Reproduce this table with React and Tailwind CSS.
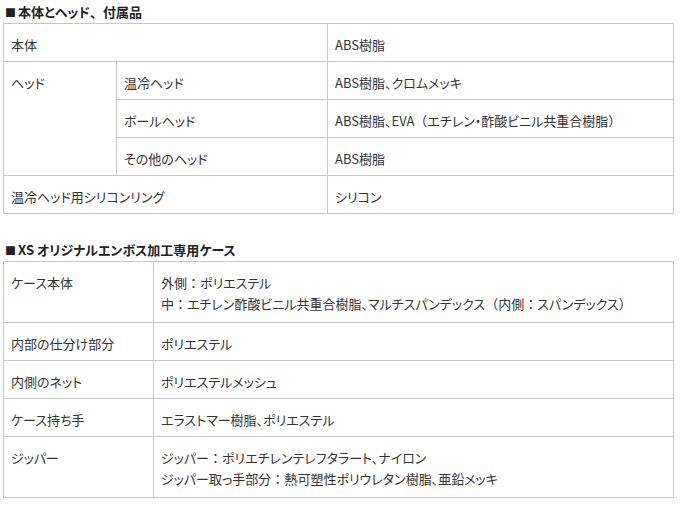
const font = "font-['Noto_Sans_CJK_JP',sans-serif] [font-feature-settings:'palt']";

const td = "border border-[#c8c8c8] px-[7px] pt-[10px] pb-[6px] align-top text-left font-normal";

// full-width punctuation keeps its normal width, kana stay proportional
function T({ s }) {
  return s.split(/([：（）])/).map((p, i) =>
    /^[：（）]$/.test(p) ? (
      <span key={i} className="[font-feature-settings:normal]">{p}</span>
    ) : (
      p
    )
  );
}

function Title({ children }) {
  return (
    <h3 className="pl-[5px] pt-[2px] mb-[1px] h-[22px] text-[13px] leading-[20px] font-bold text-[#222]">
      <span className="text-[11px] leading-none mr-[2px]">■</span>
      {children}
    </h3>
  );
}

export default function App() {
  return (
    <div className={`${font} bg-white w-[682px] h-[507px] text-[13px] leading-[21px] text-[#333]`}>
      <Title>
        本体とヘッド<span className="[font-feature-settings:normal]">、</span>付属品
      </Title>
      <table className="ml-[3px] w-[670px] border-collapse table-fixed">
        <colgroup>
          <col className="w-[113px]" />
          <col className="w-[211px]" />
          <col className="w-[346px]" />
        </colgroup>
        <tbody>
          <tr>
            <td className={td} colSpan={2}>本体</td>
            <td className={td}>ABS樹脂</td>
          </tr>
          <tr>
            <td className={td} rowSpan={3}>ヘッド</td>
            <td className={td}>温冷ヘッド</td>
            <td className={td}>ABS樹脂、クロムメッキ</td>
          </tr>
          <tr>
            <td className={td}>ボールヘッド</td>
            <td className={td}>
              <T s="ABS樹脂、EVA（エチレン・酢酸ビニル共重合樹脂）" />
            </td>
          </tr>
          <tr>
            <td className={td}>その他のヘッド</td>
            <td className={td}>ABS樹脂</td>
          </tr>
          <tr>
            <td className={td} colSpan={2}>温冷ヘッド用シリコンリング</td>
            <td className={td}>シリコン</td>
          </tr>
        </tbody>
      </table>

      <div className="mt-[24px]">
        <Title>XS オリジナルエンボス加工専用ケース</Title>
      </div>
      <table className="ml-[3px] w-[670px] border-collapse table-fixed">
        <colgroup>
          <col className="w-[150px]" />
          <col className="w-[520px]" />
        </colgroup>
        <tbody>
          <tr>
            <td className={`${td} pb-[8px]`}>ケース本体</td>
            <td className={`${td} pb-[8px]`}>
              <T s="外側：ポリエステル" />
              <br />
              <T s="中：エチレン酢酸ビニル共重合樹脂、マルチスパンデックス（内側：スパンデックス）" />
            </td>
          </tr>
          <tr>
            <td className={td}>内部の仕分け部分</td>
            <td className={td}>ポリエステル</td>
          </tr>
          <tr>
            <td className={td}>内側のネット</td>
            <td className={td}>ポリエステルメッシュ</td>
          </tr>
          <tr>
            <td className={td}>ケース持ち手</td>
            <td className={td}>エラストマー樹脂、ポリエステル</td>
          </tr>
          <tr>
            <td className={`${td} pb-[8px]`}>ジッパー</td>
            <td className={`${td} pb-[8px]`}>
              <T s="ジッパー：ポリエチレンテレフタラート、ナイロン" />
              <br />
              <T s="ジッパー取っ手部分：熱可塑性ポリウレタン樹脂、亜鉛メッキ" />
            </td>
          </tr>
        </tbody>
      </table>
    </div>
  );
}
